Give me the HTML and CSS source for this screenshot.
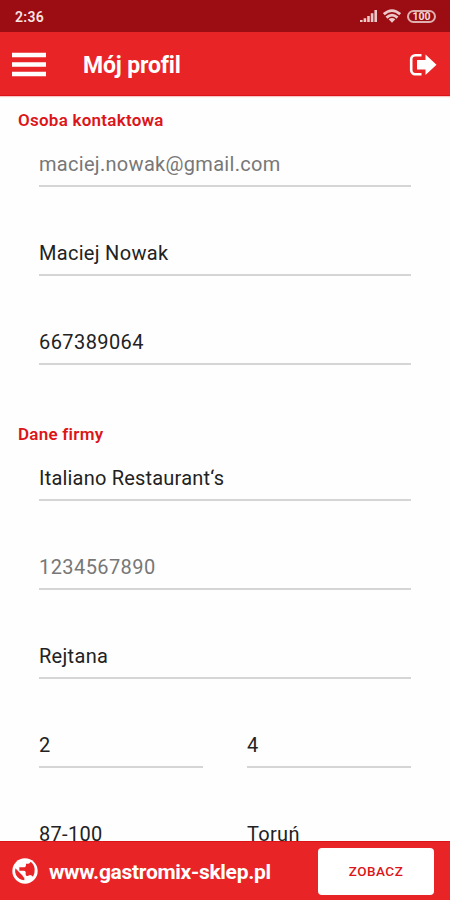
FILE: index.html
```html
<!DOCTYPE html>
<html lang="pl">
<head>
<meta charset="utf-8">
<title>Mój profil</title>
<link rel="stylesheet" href="styles.css">
</head>
<body>
<div class="screen">
  <div class="status">
    <span class="time">2:36</span>
    <svg class="signal" viewBox="0 0 18 14" width="18" height="14"><path d="M0 11h2.6v2H0zM3.6 9.3h2.6V13H3.6zM7.2 7h2.6v6H7.2zM10.8 4.3h2.6V13h-2.6zM14.4 1H17v12h-2.6z"/></svg>
    <svg class="wifi" viewBox="0 0 18 14" width="18" height="14"><g fill="none" stroke="#ecc9c9" stroke-width="2.8"><path d="M.8 5.2Q9-2 17.2 5.2M3.5 8.6Q9 3.6 14.5 8.6"/></g><path d="M5.600 10.200Q9 7.600 12.400 10.200L9 13.800z"/></svg>
    <span class="battery">100</span>
  </div>
  <header class="bar">
    <svg class="menu" viewBox="0 0 36 26" width="36" height="26"><path d="M1 .8h34v4.4H1zM1 10.3h34v4.4H1zM1 19.8h34v4.4H1z" fill="#fff"/></svg>
    <h1>Mój profil</h1>
    <svg class="exit" viewBox="0 0 28 24" width="28" height="24"><path d="M12.500 2.200H6.200A4 4 0 0 0 2.200 6.200v11.100a4 4 0 0 0 4 4H12.500" fill="none" stroke="#fff" stroke-width="2.600"/><path d="M8 6.900H16.500V1.500L27.500 11.800 16.500 22v-5.400H8z" fill="#fff"/></svg>
  </header>
  <main>
    <section>
      <h2>Osoba kontaktowa</h2>
      <div class="field muted">maciej.nowak@gmail.com</div>
      <div class="field">Maciej Nowak</div>
      <div class="field digits">667389064</div>
    </section>
    <section>
      <h2>Dane firmy</h2>
      <div class="field company">Italiano Restaurant‘s</div>
      <div class="field muted digits">1234567890</div>
      <div class="field">Rejtana</div>
      <div class="pair"><div class="field">2</div><div class="field">4</div></div>
      <div class="pair"><div class="field">87-100</div><div class="field">Toruń</div></div>
    </section>
  </main>
  <footer>
    <svg class="globe" viewBox="-1 -1 78 78" width="26" height="26"><circle cx="38" cy="38" r="38" fill="#fff"/><path fill="#e92426" d="M9 30L31 52Q32 56 36 58V66Q19 64 11 50Q7 40 9 30zM21 27H37Q41 26 41 21V16H48Q54 15 55 10Q66 18 67 32Q68 44 62 55Q58 50 53 50L46 53Q41 54 40 49V41Q39 37 34 37H21z"/></svg>
    <span class="site">www.gastromix-sklep.pl</span>
    <button type="button">ZOBACZ</button>
  </footer>
</div>
</body>
</html>
```
FILE: styles.css
```css
* { box-sizing: border-box; }
body { margin: 0; font-family: Roboto, sans-serif; background: #fefefe; }
.screen { width: 450px; height: 900px; display: flex; flex-direction: column; overflow: hidden; }
.status { flex: none; height: 32px; background: #9b0d12; display: flex; align-items: center; padding: 0 14px 0 15px; }
.status svg { fill: #ecc9c9; }
.time { flex: 1; color: #f8e4e4; font-size: 14px; font-weight: 600; letter-spacing: .3px; padding-top: 1px; }
.signal { margin-right: 5px; }
.wifi { margin-right: 6px; }
.battery { width: 29px; height: 13px; border: 2px solid #dfb0b0; border-radius: 7px; color: #f5dcdc; font-size: 10.5px; font-weight: 700; line-height: 9.5px; text-align: center; }
.bar { flex: none; height: 64px; background: #e92426; border-bottom: 1px solid #dc1417; display: flex; align-items: center; padding: 2px 13px 0 11px; box-shadow: 0 1px 1px #f6c5c5; }
h1 { flex: 1; margin: 3px 0 0 36px; color: #fff; font-size: 23px; line-height: 30px; font-weight: 700; letter-spacing: -.15px; }
main { flex: 1; min-height: 0; overflow: hidden; padding-top: 14px; }
section { height: 313px; }
section:first-child { height: 314px; }
h2 { margin: 0 18px; color: #dc1519; font-size: 17px; line-height: 21px; height: 22px; font-weight: 600; letter-spacing: .25px; }
.field { height: 55px; margin: 0 39px 34px; border-bottom: 2px solid #d5d5d5; color: #222; font-size: 20px; line-height: 64px; letter-spacing: .3px; white-space: nowrap; }
.field.muted { color: #777; }
.field.digits { letter-spacing: .42px; }
.field.company { letter-spacing: .2px; }
.pair { display: grid; grid-template-columns: 164px 164px; gap: 44px; margin: 0 39px; }
.pair .field { margin: 0 0 34px; }
footer { flex: none; height: 59px; background: #e92426; border-top: 1px solid #dc1417; display: flex; align-items: center; padding: 0 16px 0 12px; color: #fff; }
.site { flex: 1; margin-left: 11px; font-size: 21px; line-height: 28px; font-weight: 700; letter-spacing: -.3px; padding-top: 1px; }
button { width: 116px; height: 47px; padding: 0; border: 0; border-radius: 4px; background: #fff; color: #dc1519; font: 500 13.5px Roboto, sans-serif; letter-spacing: .5px; }
```
